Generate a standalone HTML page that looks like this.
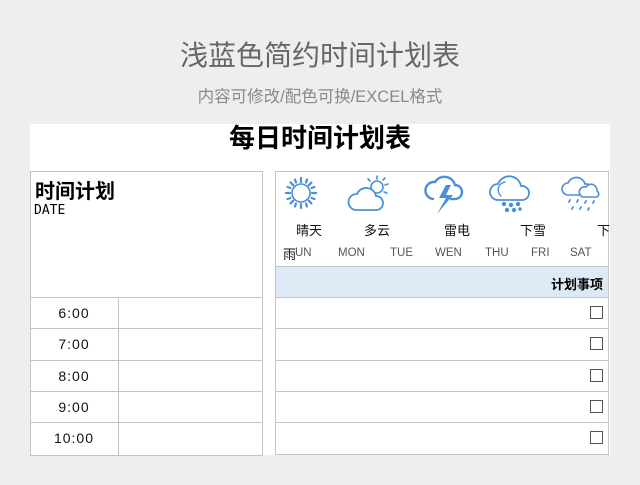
<!DOCTYPE html>
<html><head><meta charset="utf-8"><style>
body{margin:0;width:640px;height:485px;background:#eeeeee;position:relative;overflow:hidden;font-family:"Liberation Sans","Noto Sans CJK SC",sans-serif}
.a{position:absolute}
.t1{left:0;width:640px;top:37px;text-align:center;font-size:28px;color:#666;line-height:38px}
.t2{left:0;width:640px;top:87px;text-align:center;font-size:16.5px;color:#8a8a8a;line-height:20px}
.sheet{left:30px;top:124px;width:580px;height:331px;background:#fff}
.h{left:30px;width:580px;top:120px;text-align:center;font-size:26px;font-weight:bold;line-height:36px;color:#000}
.ln{background:#c4c4c4}
.tm{font-size:14px;color:#111;width:88px;text-align:center;left:30px;letter-spacing:1px}
.cb{width:11px;height:11px;border:1px solid #555;left:590px}
.wl{font-size:13px;color:#111}
.dl{font-size:11.5px;color:#555}
</style></head><body>
<div class="a t1">浅蓝色简约时间计划表</div>
<div class="a t2">内容可修改/配色可换/EXCEL格式</div>
<div class="a sheet"></div>
<div class="a h">每日时间计划表</div>

<div class="a" style="left:30px;top:171px;width:231px;height:283px;border:1px solid #c4c4c4"></div>
<div class="a" style="left:35px;top:175px;font-size:20px;font-weight:bold">时间计划</div>
<div class="a" style="left:34px;top:203px;font-size:13px;font-family:'DejaVu Sans Mono','Liberation Mono',monospace">DATE</div>
<div class="a ln" style="left:118px;top:297px;width:1px;height:158px"></div>
<div class="a ln" style="left:30px;top:297px;width:232px;height:1px"></div>
<div class="a ln" style="left:30px;top:328px;width:232px;height:1px"></div>
<div class="a ln" style="left:30px;top:360px;width:232px;height:1px"></div>
<div class="a ln" style="left:30px;top:391px;width:232px;height:1px"></div>
<div class="a ln" style="left:30px;top:422px;width:232px;height:1px"></div>
<div class="a tm" style="top:305px">6:00</div>
<div class="a tm" style="top:336px">7:00</div>
<div class="a tm" style="top:368px">8:00</div>
<div class="a tm" style="top:399px">9:00</div>
<div class="a tm" style="top:430px">10:00</div>

<div class="a" style="left:275px;top:171px;width:332px;height:283px;border:1px solid #c4c4c4;border-bottom:none"></div>
<div class="a" style="left:276px;top:266px;width:332px;height:31px;background:#dde9f5;border-top:1px solid #c4c4c4"></div>
<div class="a" style="left:551px;top:274px;font-size:13px;font-weight:bold">计划事项</div>
<div class="a ln" style="left:275px;top:297px;width:333px;height:1px"></div>
<div class="a ln" style="left:275px;top:328px;width:333px;height:1px"></div>
<div class="a ln" style="left:275px;top:360px;width:333px;height:1px"></div>
<div class="a ln" style="left:275px;top:391px;width:333px;height:1px"></div>
<div class="a ln" style="left:275px;top:422px;width:333px;height:1px"></div>
<div class="a ln" style="left:275px;top:454px;width:333px;height:1px"></div>
<div class="a cb" style="top:306px"></div>
<div class="a cb" style="top:337px"></div>
<div class="a cb" style="top:369px"></div>
<div class="a cb" style="top:400px"></div>
<div class="a cb" style="top:431px"></div>

<svg class="a" style="left:276px;top:172px" width="331" height="45" viewBox="0 0 331 45" fill="none" stroke="#4a90d9" stroke-width="1.6" stroke-linecap="round">
<circle cx="25" cy="21" r="9"/>
<g stroke-width="2.2"><path d="M25 6v4M25 32v4M10 21h4M36 21h4M14.5 10.5l2.8 2.8M32.7 28.7l2.8 2.8M35.5 10.5l-2.8 2.8M17.3 28.7l-2.8 2.8M19 7.5l1 3M31 7.5l-1 3M19 34.5l1-3M31 34.5l-1-3M11.5 15l3 1M11.5 27l3-1M38.5 15l-3 1M38.5 27l-3-1"/></g>
<circle cx="101" cy="15" r="6"/>
<path d="M101 4v3M112 12l-3 1M111 21l-3-1M92 7l2 2M109 6l-2 2"/>
<path d="M80 38h20a7 7 0 0 0 0-14a10 10 0 0 0-19-2a8 8 0 0 0-1 16z" fill="#fff" stroke-width="1.8"/>
<path d="M157 27a8 8 0 0 1 2-17a11 11 0 0 1 20 3a7 7 0 0 1 0 14h-4" stroke-width="2.4"/>
<path d="M170 13l-7 13h7l-9 16l16-19h-7l5-10z" fill="#4a90d9" stroke="none"/>
<path d="M222 28a8 8 0 0 1 0-16a12 12 0 0 1 23 2a7 7 0 0 1 2 14z" stroke-width="1.8"/>
<path d="M225 24a8 8 0 0 1 4-14" stroke-width="1.4"/>
<g fill="#4a90d9" stroke="none"><circle cx="228" cy="32" r="2.2"/><circle cx="235" cy="33" r="2.2"/><circle cx="242" cy="32" r="2.2"/><circle cx="231" cy="38" r="2.2"/><circle cx="238" cy="38" r="2.2"/><circle cx="244" cy="37" r="1.8"/></g>
<path d="M292 23a6 6 0 0 1 0-12a9 9 0 0 1 17 1a5 5 0 0 1 2 11z"/>
<path d="M307 25a5 5 0 0 1 3-10a6 6 0 0 1 11 4a3.5 3.5 0 0 1 0 6z" fill="#fff"/>
<g stroke-width="1.8"><path d="M294 28l-1 2M302 28l-1 2M310 29l-1 2M318 29l-1 2M297 35l-1 2M305 35l-1 2M313 36l-1 2"/></g>
</svg>
<div class="a wl" style="left:296px;top:220px">晴天</div>
<div class="a wl" style="left:364px;top:220px">多云</div>
<div class="a wl" style="left:444px;top:220px">雷电</div>
<div class="a wl" style="left:520px;top:220px">下雪</div>
<div class="a wl" style="left:597px;top:220px">下</div>
<div class="a wl" style="left:283px;top:244px">雨</div>
<div class="a dl" style="left:295px;top:247px">UN</div>
<div class="a dl" style="left:338px;top:247px">MON</div>
<div class="a dl" style="left:390px;top:247px">TUE</div>
<div class="a dl" style="left:435px;top:247px">WEN</div>
<div class="a dl" style="left:485px;top:247px">THU</div>
<div class="a dl" style="left:531px;top:247px">FRI</div>
<div class="a dl" style="left:570px;top:247px">SAT</div>
</body></html>
